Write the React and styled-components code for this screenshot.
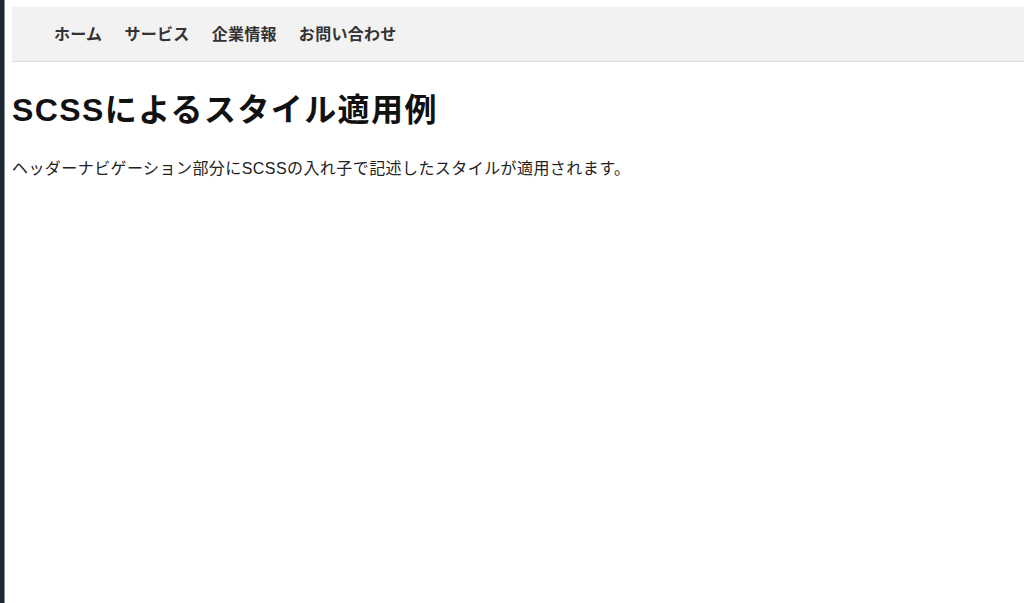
import React from 'react';
import styled, { createGlobalStyle } from 'styled-components';

const GlobalStyle = createGlobalStyle`
  html, body {
    margin: 0;
    padding: 0;
    background: #fff;
  }
  body {
    font-family: "Liberation Sans", "Noto Sans CJK JP", sans-serif;
    color: #222;
  }
`;

const links = ['ホーム', 'サービス', '企業情報', 'お問い合わせ'];

const Frame = styled.div`
  display: flex;
  min-height: 603px;
`;

const Edge = styled.div`
  width: 4px;
  flex: none;
  background: #1b2833;
  border-right: 1px solid #8a9299;
`;

const Page = styled.div`
  flex: 1;
  padding: 7px 0 0 7px;
`;

const Header = styled.header`
  background: #f2f2f2;
  border-bottom: 1px solid #dcdcdc;
`;

const Nav = styled.ul`
  display: flex;
  gap: 22px;
  list-style: none;
  margin: 0;
  padding: 17px 0 15px 42px;
`;

const NavItem = styled.li`
  font-size: 16px;
  line-height: 22px;
  font-weight: bold;
  letter-spacing: 0.3px;
  color: #333;
`;

const Title = styled.h1`
  margin: 28px 0 0;
  font-size: 32px;
  line-height: 40px;
  font-weight: bold;
  letter-spacing: 1.4px;
  color: #111;
`;

const Text = styled.p`
  margin: 27px 0 0;
  font-size: 16px;
  line-height: 24px;
  letter-spacing: 0.43px;
  color: #222;
`;

export default function App() {
  return (
    <>
      <GlobalStyle />
      <Frame>
        <Edge />
        <Page>
          <Header>
            <Nav>
              {links.map((l) => (
                <NavItem key={l}>{l}</NavItem>
              ))}
            </Nav>
          </Header>
          <Title>SCSSによるスタイル適用例</Title>
          <Text>ヘッダーナビゲーション部分にSCSSの入れ子で記述したスタイルが適用されます。</Text>
        </Page>
      </Frame>
    </>
  );
}
